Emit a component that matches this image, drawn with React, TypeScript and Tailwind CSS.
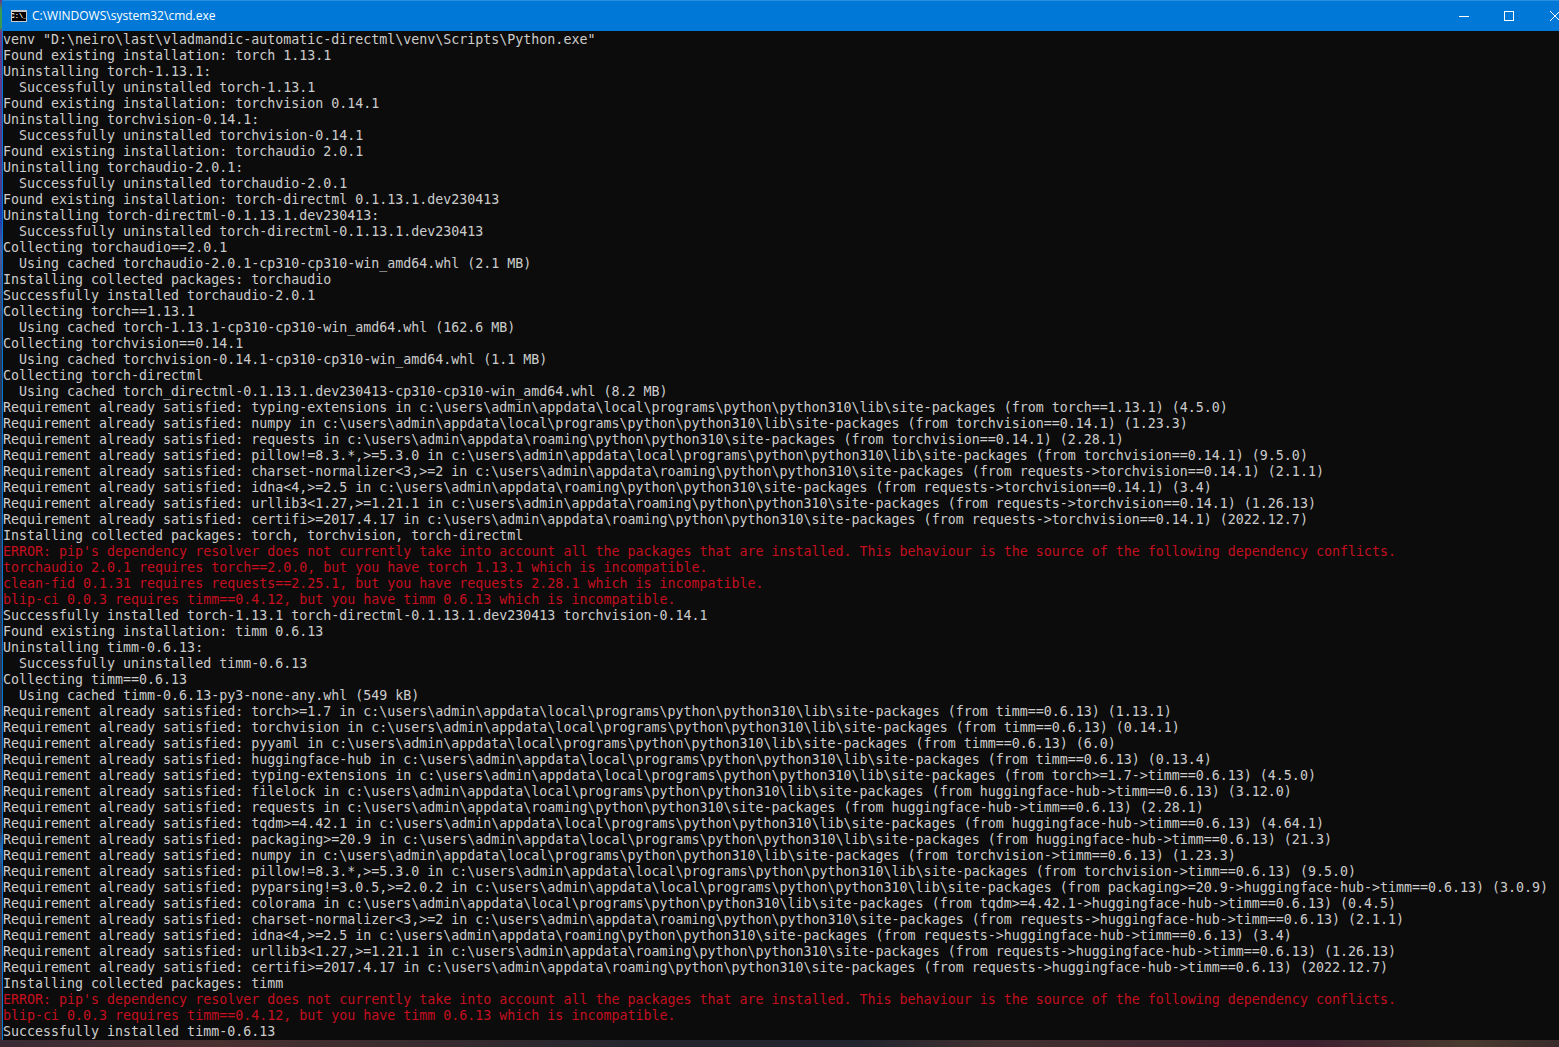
import React from 'react';

const log: string[] = [
  'venv "D:\\neiro\\last\\vladmandic-automatic-directml\\venv\\Scripts\\Python.exe"',
  'Found existing installation: torch 1.13.1',
  'Uninstalling torch-1.13.1:',
  '  Successfully uninstalled torch-1.13.1',
  'Found existing installation: torchvision 0.14.1',
  'Uninstalling torchvision-0.14.1:',
  '  Successfully uninstalled torchvision-0.14.1',
  'Found existing installation: torchaudio 2.0.1',
  'Uninstalling torchaudio-2.0.1:',
  '  Successfully uninstalled torchaudio-2.0.1',
  'Found existing installation: torch-directml 0.1.13.1.dev230413',
  'Uninstalling torch-directml-0.1.13.1.dev230413:',
  '  Successfully uninstalled torch-directml-0.1.13.1.dev230413',
  'Collecting torchaudio==2.0.1',
  '  Using cached torchaudio-2.0.1-cp310-cp310-win_amd64.whl (2.1 MB)',
  'Installing collected packages: torchaudio',
  'Successfully installed torchaudio-2.0.1',
  'Collecting torch==1.13.1',
  '  Using cached torch-1.13.1-cp310-cp310-win_amd64.whl (162.6 MB)',
  'Collecting torchvision==0.14.1',
  '  Using cached torchvision-0.14.1-cp310-cp310-win_amd64.whl (1.1 MB)',
  'Collecting torch-directml',
  '  Using cached torch_directml-0.1.13.1.dev230413-cp310-cp310-win_amd64.whl (8.2 MB)',
  'Requirement already satisfied: typing-extensions in c:\\users\\admin\\appdata\\local\\programs\\python\\python310\\lib\\site-packages (from torch==1.13.1) (4.5.0)',
  'Requirement already satisfied: numpy in c:\\users\\admin\\appdata\\local\\programs\\python\\python310\\lib\\site-packages (from torchvision==0.14.1) (1.23.3)',
  'Requirement already satisfied: requests in c:\\users\\admin\\appdata\\roaming\\python\\python310\\site-packages (from torchvision==0.14.1) (2.28.1)',
  'Requirement already satisfied: pillow!=8.3.*,>=5.3.0 in c:\\users\\admin\\appdata\\local\\programs\\python\\python310\\lib\\site-packages (from torchvision==0.14.1) (9.5.0)',
  'Requirement already satisfied: charset-normalizer<3,>=2 in c:\\users\\admin\\appdata\\roaming\\python\\python310\\site-packages (from requests->torchvision==0.14.1) (2.1.1)',
  'Requirement already satisfied: idna<4,>=2.5 in c:\\users\\admin\\appdata\\roaming\\python\\python310\\site-packages (from requests->torchvision==0.14.1) (3.4)',
  'Requirement already satisfied: urllib3<1.27,>=1.21.1 in c:\\users\\admin\\appdata\\roaming\\python\\python310\\site-packages (from requests->torchvision==0.14.1) (1.26.13)',
  'Requirement already satisfied: certifi>=2017.4.17 in c:\\users\\admin\\appdata\\roaming\\python\\python310\\site-packages (from requests->torchvision==0.14.1) (2022.12.7)',
  'Installing collected packages: torch, torchvision, torch-directml',
  "!ERROR: pip's dependency resolver does not currently take into account all the packages that are installed. This behaviour is the source of the following dependency conflicts.",
  '!torchaudio 2.0.1 requires torch==2.0.0, but you have torch 1.13.1 which is incompatible.',
  '!clean-fid 0.1.31 requires requests==2.25.1, but you have requests 2.28.1 which is incompatible.',
  '!blip-ci 0.0.3 requires timm==0.4.12, but you have timm 0.6.13 which is incompatible.',
  'Successfully installed torch-1.13.1 torch-directml-0.1.13.1.dev230413 torchvision-0.14.1',
  'Found existing installation: timm 0.6.13',
  'Uninstalling timm-0.6.13:',
  '  Successfully uninstalled timm-0.6.13',
  'Collecting timm==0.6.13',
  '  Using cached timm-0.6.13-py3-none-any.whl (549 kB)',
  'Requirement already satisfied: torch>=1.7 in c:\\users\\admin\\appdata\\local\\programs\\python\\python310\\lib\\site-packages (from timm==0.6.13) (1.13.1)',
  'Requirement already satisfied: torchvision in c:\\users\\admin\\appdata\\local\\programs\\python\\python310\\lib\\site-packages (from timm==0.6.13) (0.14.1)',
  'Requirement already satisfied: pyyaml in c:\\users\\admin\\appdata\\local\\programs\\python\\python310\\lib\\site-packages (from timm==0.6.13) (6.0)',
  'Requirement already satisfied: huggingface-hub in c:\\users\\admin\\appdata\\local\\programs\\python\\python310\\lib\\site-packages (from timm==0.6.13) (0.13.4)',
  'Requirement already satisfied: typing-extensions in c:\\users\\admin\\appdata\\local\\programs\\python\\python310\\lib\\site-packages (from torch>=1.7->timm==0.6.13) (4.5.0)',
  'Requirement already satisfied: filelock in c:\\users\\admin\\appdata\\local\\programs\\python\\python310\\lib\\site-packages (from huggingface-hub->timm==0.6.13) (3.12.0)',
  'Requirement already satisfied: requests in c:\\users\\admin\\appdata\\roaming\\python\\python310\\site-packages (from huggingface-hub->timm==0.6.13) (2.28.1)',
  'Requirement already satisfied: tqdm>=4.42.1 in c:\\users\\admin\\appdata\\local\\programs\\python\\python310\\lib\\site-packages (from huggingface-hub->timm==0.6.13) (4.64.1)',
  'Requirement already satisfied: packaging>=20.9 in c:\\users\\admin\\appdata\\local\\programs\\python\\python310\\lib\\site-packages (from huggingface-hub->timm==0.6.13) (21.3)',
  'Requirement already satisfied: numpy in c:\\users\\admin\\appdata\\local\\programs\\python\\python310\\lib\\site-packages (from torchvision->timm==0.6.13) (1.23.3)',
  'Requirement already satisfied: pillow!=8.3.*,>=5.3.0 in c:\\users\\admin\\appdata\\local\\programs\\python\\python310\\lib\\site-packages (from torchvision->timm==0.6.13) (9.5.0)',
  'Requirement already satisfied: pyparsing!=3.0.5,>=2.0.2 in c:\\users\\admin\\appdata\\local\\programs\\python\\python310\\lib\\site-packages (from packaging>=20.9->huggingface-hub->timm==0.6.13) (3.0.9)',
  'Requirement already satisfied: colorama in c:\\users\\admin\\appdata\\local\\programs\\python\\python310\\lib\\site-packages (from tqdm>=4.42.1->huggingface-hub->timm==0.6.13) (0.4.5)',
  'Requirement already satisfied: charset-normalizer<3,>=2 in c:\\users\\admin\\appdata\\roaming\\python\\python310\\site-packages (from requests->huggingface-hub->timm==0.6.13) (2.1.1)',
  'Requirement already satisfied: idna<4,>=2.5 in c:\\users\\admin\\appdata\\roaming\\python\\python310\\site-packages (from requests->huggingface-hub->timm==0.6.13) (3.4)',
  'Requirement already satisfied: urllib3<1.27,>=1.21.1 in c:\\users\\admin\\appdata\\roaming\\python\\python310\\site-packages (from requests->huggingface-hub->timm==0.6.13) (1.26.13)',
  'Requirement already satisfied: certifi>=2017.4.17 in c:\\users\\admin\\appdata\\roaming\\python\\python310\\site-packages (from requests->huggingface-hub->timm==0.6.13) (2022.12.7)',
  'Installing collected packages: timm',
  "!ERROR: pip's dependency resolver does not currently take into account all the packages that are installed. This behaviour is the source of the following dependency conflicts.",
  '!blip-ci 0.0.3 requires timm==0.4.12, but you have timm 0.6.13 which is incompatible.',
  'Successfully installed timm-0.6.13',
];

export default function App() {
  return (
    <div className="w-[1559px] h-[1047px] overflow-hidden flex flex-col">
      <div className="h-[1040px] flex-none flex">
        {/* sliver of desktop wallpaper left of the window */}
        <div className="w-[2px] flex-none bg-[linear-gradient(180deg,#6a3a8a_0px,#3a9a50_10px,#3a9a50_27px,#6a3a8a_32px,#4a3a8a_190px,#1a3ab0_215px,#4a5a9a_250px,#2a3a5a_350px,#2a3a5a_700px,#3a3040_830px,#2a6ab0_850px,#3a3040_880px,#4a3030_1040px)]" />
        <div className="flex-1 min-w-0 flex flex-col border-l border-[#0078d7]">
          <div className="h-[31px] flex-none flex items-center bg-[#0078d7] border-t border-[#2a8fe0] text-white">
            <div className="ml-[8px] w-[16px] h-[12px] bg-black border border-[#c8c8c8] border-t-2 flex items-center justify-center overflow-hidden">
              <span className="text-[7px] leading-none font-bold text-white font-['Liberation_Mono',monospace]">C:\_</span>
            </div>
            <span className="ml-[5px] text-[12px] font-['Open_Sans',sans-serif]">C:\WINDOWS\system32\cmd.exe</span>
            <div className="ml-auto flex items-center gap-[35px] mr-[-1px]">
              <svg width="10" height="10" viewBox="0 0 10 10" stroke="white" fill="none">
                <path d="M0 5.5H10" />
              </svg>
              <svg width="10" height="10" viewBox="0 0 10 10" stroke="white" fill="none">
                <rect x="0.5" y="0.5" width="9" height="9" />
              </svg>
              <svg width="10" height="10" viewBox="0 0 10 10" stroke="white" fill="none" className="ml-px">
                <path d="M0 0L10 10M10 0L0 10" />
              </svg>
            </div>
          </div>
          <div className="flex-1 min-h-0 pt-[1px] bg-[#0c0c0c] overflow-hidden font-['DejaVu_Sans_Mono',monospace] text-[13.3px] leading-[16px] text-[#cccccc]">
            {log.map((line, i) =>
              line.startsWith('!') ? (
                <div key={i} className="h-4 whitespace-pre text-[#c50f1f]">{line.slice(1)}</div>
              ) : (
                <div key={i} className="h-4 whitespace-pre">{line}</div>
              )
            )}
          </div>
        </div>
      </div>
      <div className="flex-1 bg-[linear-gradient(90deg,#3a2a35_0%,#4a302f_14%,#25252e_41%,#22242f_55%,#42302f_64%,#3d2030_84%,#4a3a2e_94%,#3a2a2a_100%)]" />
    </div>
  );
}
